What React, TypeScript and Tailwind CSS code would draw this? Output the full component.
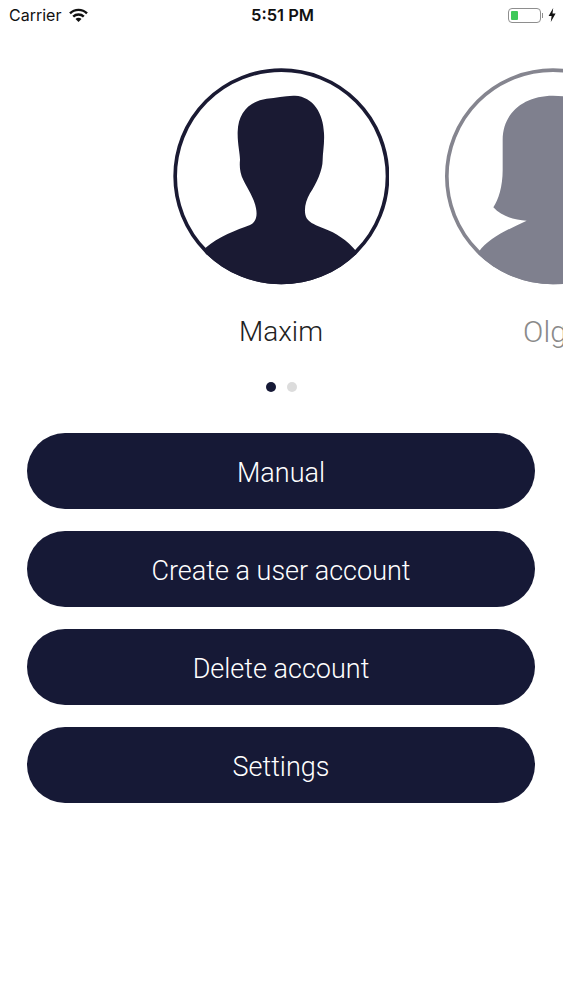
import React from 'react';

const Man: React.FC = () => (
    <svg viewBox="39 24 648 651" className="h-[217px] w-[216px]">
        <defs>
            <clipPath id="man-clip">
                <circle cx="364" cy="349" r="324" />
            </clipPath>
        </defs>
        <circle cx="364" cy="349" r="318.5" fill="none" stroke="#1a1a33" strokeWidth="11" />
        <path
            fill="#1a1a33"
            clipPath="url(#man-clip)"
            d="M136 564C175 530 230 510 270 495C290 485 292 465 288 445C283 415 262 385 250 360C240 340 238 320 240 300C240 280 232 250 233 215C235 160 265 125 320 116C350 114 375 106 405 107C460 110 490 160 492 220C494 250 488 280 488 300C488 330 470 370 450 400C435 425 430 455 440 475C450 490 470 497 490 505C530 520 560 540 589 574L589 700L136 700Z"
        />
    </svg>
);

const Woman: React.FC = () => (
    <svg viewBox="45 24 648 651" className="h-[217px] w-[216px] shrink-0">
        <defs>
            <clipPath id="woman-clip">
                <circle cx="369" cy="349" r="324" />
            </clipPath>
        </defs>
        <circle cx="369" cy="349" r="318.5" fill="none" stroke="#85858f" strokeWidth="11" />
        <path
            fill="#7f808e"
            clipPath="url(#woman-clip)"
            d="M146 576C175 535 230 510 290 482C255 480 215 470 190 442C205 420 218 380 218 330L218 240C218 160 280 107 369 107C458 107 520 160 520 240L520 330C520 380 533 420 548 442C523 470 483 480 448 482C508 510 563 535 592 576L592 700L146 700Z"
        />
    </svg>
);

const StatusBar: React.FC = () => (
    <div className="flex h-[30px] items-center pl-[9px] pr-[7px] font-['Inter',sans-serif] text-[#111]">
        <div className="flex flex-1 items-center gap-[8px]">
            <span className="text-[16px] leading-none">Carrier</span>
            <svg viewBox="0 0 19 14" className="h-[14px] w-[19px]" fill="none" stroke="#111" strokeWidth="2.4">
                <path d="M1 5.4a12 12 0 0 1 17 0" />
                <path d="M4.2 8.6a7.6 7.6 0 0 1 10.6 0" />
                <path d="M9.5 14l-3-3a4.2 4.2 0 0 1 6 0z" fill="#111" stroke="none" />
            </svg>
        </div>
        <span className="text-[16.5px] font-semibold leading-none">5:51 PM</span>
        <div className="flex flex-1 items-center justify-end">
            <div className="flex h-[15px] w-[33px] items-center rounded-[4px] border-[1.5px] border-[#8e8e8e] p-[2px]">
                <div className="h-full w-[7px] rounded-[1px] bg-[#3fc95a]" />
            </div>
            <div className="ml-[1px] mr-[5px] h-[5px] w-[1px] bg-[#8e8e8e]" />
            <svg viewBox="0 0 8 14" className="h-[14px] w-[8px]" fill="#111">
                <path d="M5.2 0L0.6 8H3.6L2.8 14L7.6 5.6H4.5Z" />
            </svg>
        </div>
    </div>
);

const BUTTONS = ['Manual', 'Create a user account', 'Delete account', 'Settings'];

export default function App() {
    return (
        <div className="min-h-[1000px] overflow-hidden bg-white font-['Roboto','Liberation_Sans',sans-serif]">
            <StatusBar />

            {/* Profile carousel */}
            <div className="mt-[38px] flex gap-[56px] pl-[173px]">
                <div className="flex w-[216px] shrink-0 flex-col items-center">
                    <Man />
                    <span className="mt-[30px] text-[28px] font-light leading-[34px] text-[#222]">Maxim</span>
                </div>
                <div className="flex w-[216px] shrink-0 flex-col items-center">
                    <Woman />
                    <span className="mt-[30px] text-[30px] font-light leading-[34px] text-[#8a8a8a]">Olga</span>
                </div>
            </div>

            {/* Page dots */}
            <div className="mt-[33px] flex items-center justify-center gap-[11px] pr-[1px]">
                <div className="size-[10px] rounded-full bg-[#161936]" />
                <div className="size-[10px] rounded-full bg-[#dcdcdc]" />
            </div>

            {/* Actions */}
            <div className="mt-[41px] flex flex-col gap-[22px] pl-[27px] pr-[28px]">
                {BUTTONS.map((label) => (
                    <button
                        key={label}
                        className="h-[76px] rounded-full bg-[#161936] pt-[4px] text-[27px] font-light text-white"
                    >
                        {label}
                    </button>
                ))}
            </div>
        </div>
    );
}
